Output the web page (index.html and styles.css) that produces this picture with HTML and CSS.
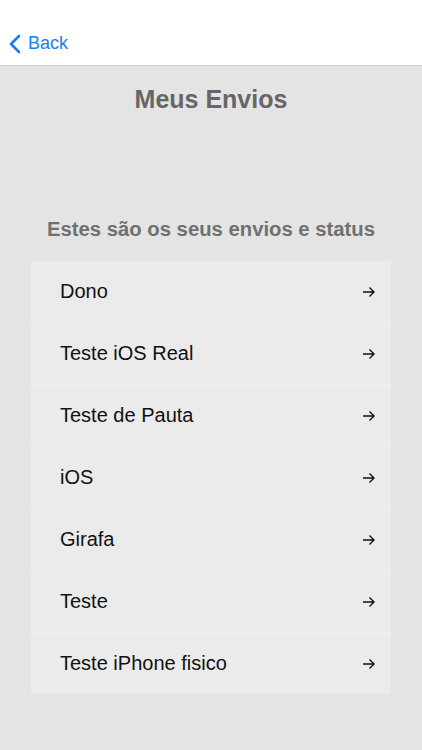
FILE: index.html
```html
<!DOCTYPE html>
<html lang="pt">
<head>
    <meta charset="UTF-8">
    <meta name="viewport" content="width=device-width, initial-scale=1.0">
    <title>Meus Envios</title>
    <link rel="stylesheet" href="styles.css">
</head>
<body>
    <div class="navbar">
        <a class="back" href="#">
            <svg class="chevron" width="12" height="20" viewBox="0 0 12 20">
                <path d="M10 2 L2 10 L10 18" fill="none" stroke="#1a7df0" stroke-width="2.6" stroke-linecap="round" stroke-linejoin="round"/>
            </svg>
            <span>Back</span>
        </a>
    </div>

    <div class="content">
        <h1>Meus Envios</h1>
        <h2>Estes são os seus envios e status</h2>

        <ul class="envios">
            <li><span>Dono</span><svg class="arrow" width="14" height="12" viewBox="0 0 14 12"><path d="M1 6 H12 M7.5 1.5 L12 6 L7.5 10.5" fill="none" stroke="#111" stroke-width="1.4"/></svg></li>
            <li><span>Teste iOS Real</span><svg class="arrow" width="14" height="12" viewBox="0 0 14 12"><path d="M1 6 H12 M7.5 1.5 L12 6 L7.5 10.5" fill="none" stroke="#111" stroke-width="1.4"/></svg></li>
            <li><span>Teste de Pauta</span><svg class="arrow" width="14" height="12" viewBox="0 0 14 12"><path d="M1 6 H12 M7.5 1.5 L12 6 L7.5 10.5" fill="none" stroke="#111" stroke-width="1.4"/></svg></li>
            <li><span>iOS</span><svg class="arrow" width="14" height="12" viewBox="0 0 14 12"><path d="M1 6 H12 M7.5 1.5 L12 6 L7.5 10.5" fill="none" stroke="#111" stroke-width="1.4"/></svg></li>
            <li><span>Girafa</span><svg class="arrow" width="14" height="12" viewBox="0 0 14 12"><path d="M1 6 H12 M7.5 1.5 L12 6 L7.5 10.5" fill="none" stroke="#111" stroke-width="1.4"/></svg></li>
            <li><span>Teste</span><svg class="arrow" width="14" height="12" viewBox="0 0 14 12"><path d="M1 6 H12 M7.5 1.5 L12 6 L7.5 10.5" fill="none" stroke="#111" stroke-width="1.4"/></svg></li>
            <li><span>Teste iPhone fisico</span><svg class="arrow" width="14" height="12" viewBox="0 0 14 12"><path d="M1 6 H12 M7.5 1.5 L12 6 L7.5 10.5" fill="none" stroke="#111" stroke-width="1.4"/></svg></li>
        </ul>
    </div>
</body>
</html>
```

FILE: styles.css
```css
body {
    margin: 0;
    padding: 0;
    font-family: "Liberation Sans", Arial, sans-serif;
    background-color: #e4e4e4;
    height: 750px;
    overflow: hidden;
}

.navbar {
    height: 65px;
    background: #ffffff;
    border-bottom: 1px solid #cfcfcf;
    display: flex;
    align-items: flex-end;
    padding-left: 9px;
}

.back {
    display: flex;
    align-items: center;
    gap: 7px;
    margin-bottom: 11px;
    color: #1a7df0;
    font-size: 18px;
    text-decoration: none;
}

.chevron {
    display: block;
}

.content {
    padding: 0 31px;
}

h1 {
    margin: 18px 0 0;
    text-align: center;
    font-size: 25px;
    line-height: 30px;
    font-weight: bold;
    color: #666666;
}

h2 {
    margin: 103px 0 0;
    text-align: center;
    font-size: 20.3px;
    line-height: 24px;
    font-weight: bold;
    color: #707070;
}

.envios {
    list-style: none;
    margin: 20px 0 0;
    padding: 0;
}

.envios li {
    height: 61px;
    display: flex;
    align-items: center;
    justify-content: space-between;
    padding: 0 15px 0 29px;
    background: #ebebeb;
    border-bottom: 1px solid #f0f0f0;
    font-size: 20px;
    color: #111111;
}

.envios li:last-child {
    border-bottom: none;
}

.arrow {
    display: block;
}
```
